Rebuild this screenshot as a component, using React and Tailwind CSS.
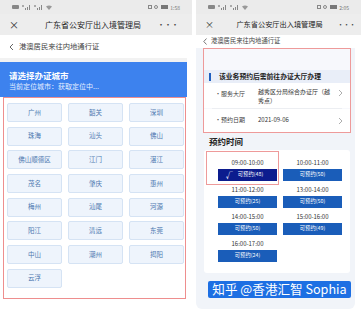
import React from 'react'

const CITIES = ['广州', '韶关', '深圳', '珠海', '汕头', '佛山', '佛山顺德区', '江门', '湛江', '茂名', '肇庆', '惠州', '梅州', '汕尾', '河源', '阳江', '清远', '东莞', '中山', '潮州', '揭阳', '云浮']

const SLOTS = [
  { time: '09:00-10:00', left: 48, picked: true },
  { time: '10:00-11:00', left: 50 },
  { time: '11:00-12:00', left: 25 },
  { time: '13:00-14:00', left: 50 },
  { time: '14:00-15:00', left: 50 },
  { time: '15:00-16:00', left: 49 },
  { time: '16:00-17:00', left: 24 },
]

const StatusBar = ({ time }) => (
  <div className="h-[14px] bg-[#ebebeb] flex items-center justify-between px-[12px] text-[#777]">
    <div className="flex items-center gap-[3px]">
      <div className="w-[7px] h-[4px] bg-[#888] rounded-[1px]" />
      <svg width="9" height="5" viewBox="0 0 9 5"><rect x="3" y="3" width="1" height="2" fill="#888" /><rect x="5" y="2" width="1" height="3" fill="#888" /><rect x="7" y="0" width="1" height="5" fill="#888" /><rect x="0" y="0" width="2" height="2" fill="#aaa" /></svg>
      <svg width="9" height="5" viewBox="0 0 9 5"><rect x="3" y="3" width="1" height="2" fill="#888" /><rect x="5" y="2" width="1" height="3" fill="#888" /><rect x="7" y="0" width="1" height="5" fill="#888" /><rect x="0" y="0" width="2" height="2" fill="#aaa" /></svg>
      <svg width="6" height="5" viewBox="0 0 6 5"><path d="M0 1.5 Q3 -0.5 6 1.5 L3 5 Z" fill="#999" /></svg>
    </div>
    <div className="flex items-center gap-[2px]">
      <div className="w-[4px] h-[4px] border border-[#888]" />
      <div className="w-[4px] h-[4px] border border-[#888] rounded-full" />
      <div className="w-[7px] h-[4px] bg-[#777] ml-[1px]" />
      <span className="text-[5px] leading-none">{time}</span>
    </div>
  </div>
)

const Chevron = () => (
  <svg width="5" height="8" viewBox="0 0 5 8" className="shrink-0"><path d="M1 1 L4 4 L1 7" fill="none" stroke="#999" strokeWidth="0.8" /></svg>
)

const App = () => {
  return (
    <div className="w-[361px] h-[313px] bg-white flex overflow-hidden font-['Noto_Sans_CJK_SC',sans-serif]">
      {/* left screen */}
      <div className="w-[192px] shrink-0 flex flex-col">
        <StatusBar time="1:58" />
        <div className="h-[21px] bg-[#ededed] flex items-center justify-between pl-[9px] pr-[14px]">
          <span className="text-[10px] leading-none text-[#333]">×</span>
          <span className="text-[8px] leading-none text-[#222] ml-[10px]">广东省公安厅出入境管理局</span>
          <span className="text-[8px] leading-none text-[#444] tracking-[-1px]">•••</span>
        </div>
        <div className="h-[23px] bg-white flex items-center pl-[9px] gap-[5px] text-[#444]">
          <svg width="5" height="8" viewBox="0 0 5 8"><path d="M4 1 L1 4 L4 7" fill="none" stroke="#555" strokeWidth="0.9" /></svg>
          <span className="text-[7.3px] leading-none">港澳居民来往内地通行证</span>
        </div>
        <div className="h-[4px] w-[187px] bg-[#f2f2f2]" />
        <div className="w-[187px] h-[35px] bg-[#3d82ee] pl-[9px] pt-[7px] text-white">
          <div className="text-[8.5px] leading-[12px] font-bold">请选择办证城市</div>
          <div className="text-[7px] leading-[11px] text-[#e4eeff]">当前定位城市：获取定位中...</div>
        </div>
        <div className="ml-[3px] w-[183px] h-[202px] border border-[#ee8e8e] pl-[3px] pt-[5px]">
          <div className="grid grid-cols-[55px_55px_55px] gap-x-[6px] gap-y-[4.7px]">
            {CITIES.map((c) => (
              <div key={c} className="h-[19px] rounded-[2px] bg-[#eef4fc] border border-[#d5e3f4] flex items-center justify-center text-[6.5px] text-[#4d78b0]">
                {c}
              </div>
            ))}
          </div>
        </div>
      </div>

      {/* right screen */}
      <div className="w-[165px] shrink-0 ml-[4px] flex flex-col">
        <StatusBar time="2:05" />
        <div className="h-[21px] bg-[#ededed] flex items-center justify-between pl-[9px] pr-[6px]">
          <span className="text-[9px] leading-none text-[#333]">×</span>
          <span className="text-[7.2px] leading-none text-[#222] ml-[8px]">广东省公安厅出入境管理局</span>
          <span className="text-[7px] leading-none text-[#444] tracking-[-1px]">•••</span>
        </div>
        <div className="flex-1 bg-[#f1f4f9] rounded-b-[6px] mr-[6px] flex flex-col">
          <div className="h-[13px] bg-white flex items-center pl-[7px] gap-[4px] text-[#444]">
            <svg width="4" height="7" viewBox="0 0 4 7"><path d="M3.5 0.5 L0.8 3.5 L3.5 6.5" fill="none" stroke="#555" strokeWidth="0.8" /></svg>
            <span className="text-[6.3px] leading-none">港澳居民来往内地通行证</span>
          </div>
          <div className="ml-[7px] w-[148px] h-[85px] border border-[#ee9a9a] bg-[#f7f8fc] flex flex-col">
            <div className="h-[21px]" />
            <div className="h-[13px] bg-[#e9eef8] flex items-center pl-[5px] gap-[8px]">
              <div className="w-[2px] h-[8px] bg-[#1f5fbf]" />
              <span className="text-[6.8px] leading-none font-bold text-[#222]">该业务预约后需前往办证大厅办理</span>
            </div>
            <div className="h-[25px] bg-white flex items-center pl-[11px] pr-[7px] text-[6px] text-[#444]">
              <span className="w-[43px] shrink-0 -mt-[5px]">•服务大厅</span>
              <span className="flex-1 leading-[9px] text-[#333]">越秀区分局综合办证厅（越秀点）</span>
              <div className="-mt-[5px] ml-[4px]"><Chevron /></div>
            </div>
            <div className="h-[1px] bg-[#eceef2] mx-[8px]" />
            <div className="flex-1 bg-white flex items-center pl-[11px] pr-[7px] text-[6px] text-[#444]">
              <span className="w-[43px] shrink-0 -mt-[2px]">•预约日期</span>
              <span className="flex-1 text-[#333] -mt-[2px]">2021-09-06</span>
              <div className="ml-[4px]"><Chevron /></div>
            </div>
          </div>
          <div className="h-[17px] flex items-center pl-[13px] text-[8.5px] font-bold text-[#222]">预约时间</div>
          <div className="relative ml-[8px] w-[146px] h-[123px] bg-white rounded-[3px] pl-[14px] pt-[6px]">
            <div className="grid grid-cols-[59px_59px] gap-x-[6px] gap-y-[2px]">
              {SLOTS.map((s) => (
                <div key={s.time} className="flex flex-col">
                  <div className="h-[13px] flex items-center justify-center text-[6px] text-[#333]">{s.time}</div>
                  <div className={`h-[12px] flex items-center justify-center text-[5.3px] leading-none text-white ${s.picked ? 'bg-[#0c1c8e]' : 'bg-[#1a5db9]'}`}>
                    {s.picked && <span className="text-[7px] font-bold leading-none mr-[5px] -ml-[6px]">√</span>}
                    可预约({s.left})
                  </div>
                </div>
              ))}
            </div>
            <div className="absolute left-[2px] top-[1px] w-[73px] h-[34px] border border-[#ee9a9a]" />
          </div>
          <div className="ml-[12px] mt-[8px] w-[143px] h-[17px] bg-[#1d6fe3] rounded-[2px] flex items-center justify-center text-[12.6px] leading-none text-white whitespace-nowrap">
            知乎 @香港汇智 Sophia
          </div>
        </div>
        <div className="h-[4px]" />
      </div>
    </div>
  )
}

export default App
